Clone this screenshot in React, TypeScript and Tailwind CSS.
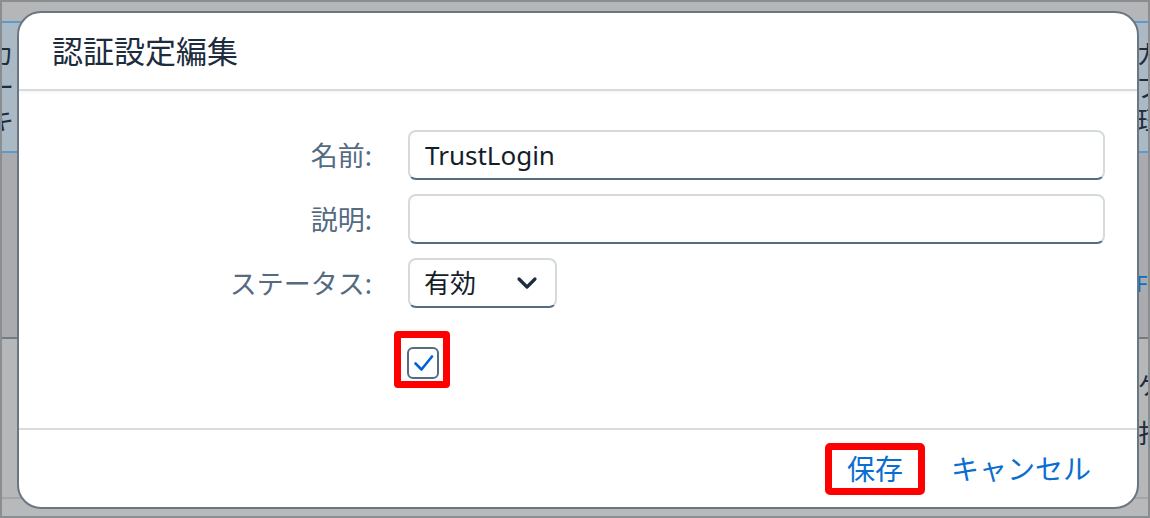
import React from "react";

const FONT = { fontFamily: '"Noto Sans", "Noto Sans CJK JP", sans-serif' };

function Frag({ text, side, cls = "" }: { text: string; side: "l" | "r"; cls?: string }) {
  return (
    <div className={`w-[12px] overflow-hidden h-[33px] flex items-center ${side === "l" ? "justify-end" : "justify-start"}`}>
      <span className={`shrink-0 text-[26px] leading-none ${cls}`}>{text}</span>
    </div>
  );
}

export default function App() {
  return (
    <div style={FONT} className="relative w-[1150px] h-[518px] overflow-hidden border-2 border-[#8b8e91] bg-[#b5b6b8]">
      {/* background page */}
      <div className="flex flex-col h-full">
        <div className="h-[19px]" />
        <div className="h-[132px] border-y-2 border-[#5a9ccf] bg-[#abb9c5] flex flex-col justify-center text-[#1d2d3e]">
          <div className="flex justify-between">
            <Frag text="カ" side="l" />
            <Frag text="カ" side="r" />
          </div>
          <div className="flex justify-between">
            <Frag text="ー" side="l" />
            <Frag text="プ" side="r" />
          </div>
          <div className="flex justify-between">
            <Frag text="キ" side="l" />
            <Frag text="珏" side="r" />
          </div>
        </div>
        <div className="h-[184px] bg-[#a9abae] flex justify-end items-center pt-[80px]">
          <div className="w-[12px] overflow-hidden">
            <span className="text-[22px] text-[#0a6ed1] leading-none">F</span>
          </div>
        </div>
        <div className="h-[160px] border-t-2 border-[#737b83] bg-[#b5b7b9] flex flex-col items-end pt-[34px] gap-[20px]">
          <div className="w-[10px] overflow-hidden">
            <span className="text-[24px] leading-none text-[#1d2d3e]">ゲ</span>
          </div>
          <div className="w-[10px] overflow-hidden">
            <span className="text-[26px] leading-none text-[#1d2d3e]">打</span>
          </div>
        </div>
        <div className="flex-1 border-t-2 border-[#a4a7aa] bg-[#b8b9bb]" />
      </div>

      {/* dialog */}
      <div className="absolute left-[15px] top-[9px] w-[1122px] h-[498px] border-2 border-[#6b7683] rounded-[24px] bg-white flex flex-col overflow-hidden">
        <div className="h-[78px] shrink-0 border-b-2 border-[#d9dadb] flex items-center pl-[33px] shadow-[0_2px_3px_rgba(0,0,0,0.04)]">
          <h1 className="text-[31px] leading-none text-[#1d2d3e] font-normal">認証設定編集</h1>
        </div>

        <div className="flex-1 pt-[39px] pr-[32px]">
          <div className="grid grid-cols-[353px_1fr] gap-x-[36px] gap-y-[14px] items-center">
            <label className="text-right text-[27px] leading-none text-[#556b82]">名前:</label>
            <div className="h-[50px] rounded-[8px] border-2 border-[#d5dadd] border-b-[#556b82] flex items-center px-[15px] text-[26px] text-[#131e29]">
              TrustLogin
            </div>

            <label className="text-right text-[27px] leading-none text-[#556b82]">説明:</label>
            <div className="h-[50px] rounded-[8px] border-2 border-[#d5dadd] border-b-[#556b82]" />

            <label className="text-right text-[27px] leading-none text-[#556b82]">ステータス:</label>
            <div className="w-[149px] h-[50px] rounded-[8px] border-2 border-[#d5dadd] border-b-[#556b82] flex items-center justify-between pl-[14px] pr-[17px] text-[26px] text-[#131e29]">
              <span>有効</span>
              <svg width="22" height="14" viewBox="0 0 22 14" fill="none">
                <path d="M3 3 L11 11 L19 3" stroke="#1d2d3e" strokeWidth="3.2" strokeLinecap="round" strokeLinejoin="round" />
              </svg>
            </div>

            <div />
            <div className="mt-[9px]">
              <div className="ml-[-14px] inline-flex border-[7px] border-[#ff0000] rounded-[4px] pt-[9px] pl-[6px] pr-[4px] pb-[2px]">
                <div className="w-[32px] h-[32px] rounded-[6px] border-2 border-[#556b82] bg-white">
                  <svg width="28" height="28" viewBox="0 0 28 28" fill="none">
                    <path d="M6.5 14.5 L12.5 20.5 L23 7.5" stroke="#0064d9" strokeWidth="2.6" strokeLinecap="round" strokeLinejoin="round" />
                  </svg>
                </div>
              </div>
            </div>
          </div>
        </div>

        <div className="h-[79px] shrink-0 border-t-2 border-[#d9dadb] flex items-center justify-end pr-[46px] gap-[26px]">
          <button className="h-[52px] border-[7px] border-[#ff0000] rounded-[5px] px-[15px] flex items-center text-[28px] leading-none text-[#0a6ed1]">
            保存
          </button>
          <button className="flex items-center text-[28px] leading-none text-[#0a6ed1]">キャンセル</button>
        </div>
      </div>
    </div>
  );
}
